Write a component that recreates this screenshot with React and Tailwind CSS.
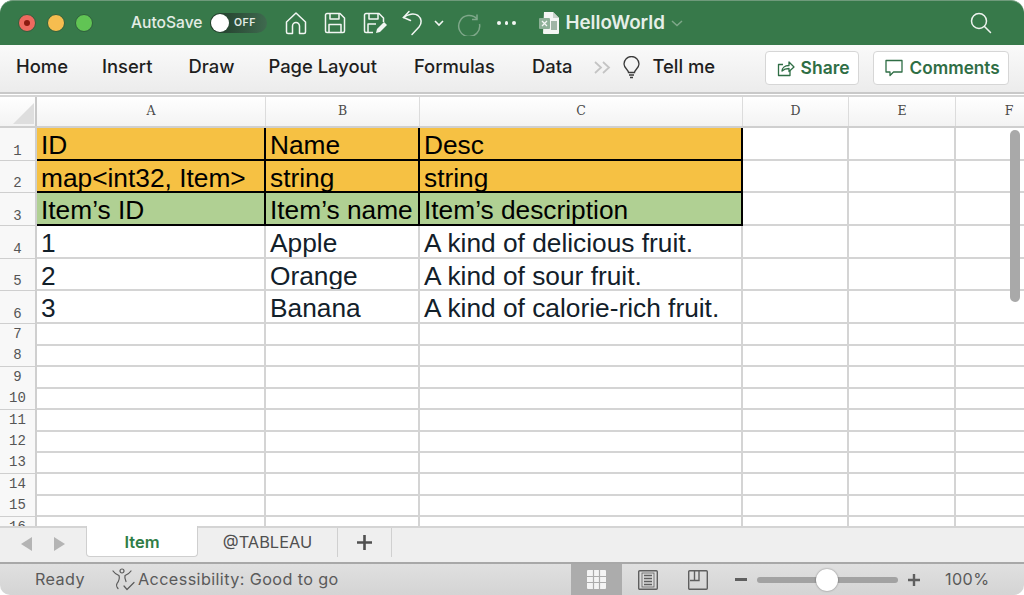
import React from "react";

const COLS = ["A", "B", "C", "D", "E", "F"];

const ROWS = [
  { n: 1, h: "h-[33px]", bg: "bg-[#f6c143]", line: true, cells: ["ID", "Name", "Desc"] },
  { n: 2, h: "h-[32px]", bg: "bg-[#f6c143]", line: true, cells: ["map<int32, Item>", "string", "string"] },
  { n: 3, h: "h-[33px]", bg: "bg-[#b0d093]", line: true, cells: ["Item’s ID", "Item’s name", "Item’s description"] },
  { n: 4, h: "h-[33px]", cells: ["1", "Apple", "A kind of delicious fruit."] },
  { n: 5, h: "h-[32px]", cells: ["2", "Orange", "A kind of sour fruit."] },
  { n: 6, h: "h-[33px]", cells: ["3", "Banana", "A kind of calorie-rich fruit."] },
];

const EMPTY = [7, 8, 9, 10, 11, 12, 13, 14, 15, 16];

function TitleBar() {
  return (
    <div className="h-[45px] shrink-0 bg-[#37794a] flex items-center text-white rounded-t-[13px] border-t border-[#6f9a7b]">
      {/* traffic lights */}
      <div className="flex items-center gap-[10.5px] ml-[18px] w-[113px]">
        <div className="w-[18px] h-[18px] rounded-full bg-[#ee6a5f] border border-[#2f5f3d] flex items-center justify-center">
          <div className="w-[6px] h-[6px] rounded-full bg-[#8c1a10]" />
        </div>
        <div className="w-[18px] h-[18px] rounded-full bg-[#f6bd4f] border border-[#2f5f3d]" />
        <div className="w-[18px] h-[18px] rounded-full bg-[#61c454] border border-[#2f5f3d]" />
      </div>
      <span className="text-[15.6px] font-medium text-[#e3ece5] w-[79px]">AutoSave</span>
      <div className="w-[57px] h-[20px] rounded-full bg-gradient-to-r from-[#1f3a28] to-[#3f6a4f] flex items-center pl-[1px]">
        <div className="w-[18px] h-[18px] rounded-full bg-white" />
        <span className="ml-[5px] text-[10.5px] font-semibold tracking-[0.5px] text-[#e3ece5]">OFF</span>
      </div>
      <svg className="ml-[18px]" width="22" height="24" viewBox="0 0 22 24" fill="none" stroke="#f2f6f3" strokeWidth="1.5" strokeLinejoin="round">
        <path d="M1.5 11 11 2l9.500 9v10a1.500 1.500 0 0 1-1.500 1.500h-4.500V15a3.500 3.500 0 0 0-7 0v7.500H3A1.500 1.500 0 0 1 1.500 21z" />
      </svg>
      <svg className="ml-[17px]" width="22" height="22" viewBox="0 0 22 22" fill="none" stroke="#f2f6f3" strokeWidth="1.5" strokeLinejoin="round">
        <path d="M3 1.500h13l4.500 4.500v13a1.500 1.500 0 0 1-1.500 1.500H3A1.500 1.500 0 0 1 1.500 19V3A1.500 1.500 0 0 1 3 1.500z" />
        <path d="M6 1.500v5.500h9V1.500M5 20.500v-8h12v8" />
      </svg>
      <svg className="ml-[17px]" width="24" height="24" viewBox="0 0 24 24" fill="none" stroke="#f2f6f3" strokeWidth="1.5" strokeLinejoin="round">
        <path d="M10 21.500H3A1.500 1.500 0 0 1 1.500 20V4A1.500 1.500 0 0 1 3 2.500h13L20.500 7v4" />
        <path d="M6 2.500V8h9V2.500M5 21v-8h8" />
        <path d="m13 22 1-4 7-7 3 3-7 7z" fill="#f2f6f3" stroke="none" />
      </svg>
      <svg className="ml-[15px]" width="22" height="26" viewBox="0 0 22 26" fill="none" stroke="#f2f6f3" strokeWidth="1.500" strokeLinecap="round">
        <path d="M7 1.500 1.500 7.500l7 3" />
        <path d="M1.500 7.500C6 4 12 3 16 5.500c4 3 4 8 1 11.500l-7 7.500" />
      </svg>
      <svg className="ml-[10px]" width="10" height="7" viewBox="0 0 10 7" fill="none" stroke="#f2f6f3" strokeWidth="1.600">
        <path d="m1 1 4 4 4-4" />
      </svg>
      <svg className="ml-[13px]" width="25" height="25" viewBox="0 0 25 25" fill="none" stroke="#7fa88a" strokeWidth="1.500">
        <path d="M20 3.500v5h-5" />
        <path d="M20 8a10.500 10.500 0 1 0 2.500 5" />
      </svg>
      <div className="ml-[15px] flex gap-[4px]">
        <div className="w-[3.500px] h-[3.500px] rounded-full bg-[#f2f6f3]" />
        <div className="w-[3.500px] h-[3.500px] rounded-full bg-[#f2f6f3]" />
        <div className="w-[3.500px] h-[3.500px] rounded-full bg-[#f2f6f3]" />
      </div>
      <svg className="ml-[23px]" width="20" height="22" viewBox="0 0 20 22">
        <path d="M5 0h9l6 6v15a1 1 0 0 1-1 1H5a1 1 0 0 1-1-1z" fill="#f4f6f4" />
        <path d="M14 0v6h6z" fill="#c9d3cb" />
        <rect x="12" y="9" width="6" height="9" fill="#9fb5a5" />
        <rect x="0" y="6" width="11" height="11" rx="1" fill="#8db097" />
        <path d="m3 9 5 5m0-5-5 5" stroke="#f4f6f4" strokeWidth="1.300" />
      </svg>
      <span className="ml-[7px] text-[18.8px] font-semibold text-[#e6efe8]">HelloWorld</span>
      <svg className="ml-[6px]" width="12" height="7" viewBox="0 0 12 7" fill="none" stroke="#7fa88a" strokeWidth="1.500">
        <path d="m1 1 5 4.500L11 1" />
      </svg>
      <svg className="ml-auto mr-[32px]" width="22" height="22" viewBox="0 0 22 22" fill="none" stroke="#eef3ef" strokeWidth="1.500" strokeLinecap="round">
        <circle cx="9" cy="9" r="7.500" />
        <path d="m14.500 14.500 6 6" />
      </svg>
    </div>
  );
}

function Ribbon() {
  return (
    <div className="h-[47px] shrink-0 pb-[3px] bg-gradient-to-b from-[#fafafa] to-[#ececec] flex items-center text-[#1e1e1e] text-[18.4px] font-medium">
      <span className="ml-[16px]">Home</span>
      <span className="ml-[34px]">Insert</span>
      <span className="ml-[36px]">Draw</span>
      <span className="ml-[34px]">Page Layout</span>
      <span className="ml-[37px]">Formulas</span>
      <span className="ml-[37px]">Data</span>
      <svg className="ml-[22px]" width="17" height="13" viewBox="0 0 17 13" fill="none" stroke="#c4c4c4" strokeWidth="1.800">
        <path d="m1 1 6 5.500L1 12M9 1l6 5.500L9 12" />
      </svg>
      <svg className="ml-[12px]" width="17" height="23" viewBox="0 0 17 23" fill="none" stroke="#3a3a3a" strokeWidth="1.300">
        <path d="M5.500 16.500c0-2.500-4.500-4.500-4.500-8.500a7.500 7.500 0 0 1 15 0c0 4-4.500 6-4.500 8.500z" />
        <path d="M6 19h5M7 21.500h3" />
      </svg>
      <span className="ml-[12px]">Tell me</span>
      <button className="ml-[50px] w-[94px] h-[34px] mt-[2px] pl-[2px] rounded-[4px] bg-white border border-[#d6d6d6] flex items-center justify-center gap-[6px] text-[#2f6e45] text-[17.5px] font-semibold">
        <svg width="18" height="18" viewBox="0 0 18 18" fill="none" stroke="#2f6e45" strokeWidth="1.300" strokeLinejoin="round">
          <path d="M6 5.500H1.500V16.500H13V12" />
          <path d="M5 12c0-3 2.500-5.500 7-5.500V3l5 5-5 4.500V9.500c-3 0-5 .5-7 2.500z" />
        </svg>
        Share
      </button>
      <button className="ml-[14px] w-[136px] h-[34px] mt-[2px] pl-[2px] rounded-[4px] bg-white border border-[#d6d6d6] flex items-center justify-center gap-[7px] text-[#2f6e45] text-[17.2px] font-semibold">
        <svg width="18" height="18" viewBox="0 0 18 18" fill="none" stroke="#2f6e45" strokeWidth="1.300" strokeLinejoin="round">
          <path d="M1 1.500h16v11.500H8.500L5 16.500V13H1z" />
        </svg>
        Comments
      </button>
    </div>
  );
}

function Sheet() {
  // last column runs past the window edge, its label sits near the scrollbar
  const grid = "grid grid-cols-[37px_229px_154px_323px_106px_107px_107px]";
  return (
    <div className="relative flex-1 overflow-hidden bg-white">
      <div className={`${grid} h-[31px] bg-gradient-to-b from-[#ffffff] to-[#f3f3f3] border-b-[2px] border-[#cfcfcf] font-['DejaVu_Serif',serif] text-[12.5px] text-[#4a4a4a]`}>
        <div className="relative border-r-[2px] border-[#c8c8c8]">
          <div className="absolute right-[1px] bottom-[2px] w-0 h-0 border-l-[21px] border-l-transparent border-b-[21px] border-b-[#dedede]" />
        </div>
        {COLS.map((c) => (
          <div key={c} className="flex items-center justify-center border-r border-[#dcdcdc]">{c}</div>
        ))}
      </div>
      {ROWS.map((r) => (
        <div key={r.n} className={`${grid} ${r.h} font-['Liberation_Sans',sans-serif] text-[26.3px] text-[#12202a]`}>
          <div className="flex items-end justify-center leading-[18px] bg-[#f8f8f8] border-r-[2px] border-b border-[#cfcfcf] font-['Liberation_Mono',monospace] text-[14px] text-[#555555]">{r.n}</div>
          {r.cells.map((t, i) => (
            <div
              key={i}
              className={`pl-[4px] pt-[5px] flex items-center whitespace-nowrap overflow-hidden ${
                r.line ? `${r.bg} border-r-[2px] border-b-[2px] border-black text-black` : "border-r-[2px] border-b-[2px] border-[#d4d4d4]"
              }`}
            >
              {t}
            </div>
          ))}
          <div className="border-r-[2px] border-b-[2px] border-[#d4d4d4]" />
          <div className="border-r-[2px] border-b-[2px] border-[#d4d4d4]" />
          <div className="border-b-[2px] border-[#d4d4d4]" />
        </div>
      ))}
      {EMPTY.map((n) => (
        <div key={n} className={`${grid} h-[21.4px]`}>
          <div className="flex items-center justify-center bg-[#f8f8f8] border-r-[2px] border-b border-[#cfcfcf] font-['Liberation_Mono',monospace] text-[14px] text-[#555555]">{n}</div>
          {[0, 1, 2, 3, 4].map((i) => (
            <div key={i} className="border-r-[2px] border-b-[2px] border-[#d4d4d4]" />
          ))}
          <div className="border-b-[2px] border-[#d4d4d4]" />
        </div>
      ))}
      {/* scrollbar thumb */}
      <div className="absolute right-[4px] top-[33px] w-[10px] h-[172px] rounded-full bg-[#a9a9a9]" />
    </div>
  );
}

function Tabs() {
  return (
    <div className="h-[36px] shrink-0 bg-[#efefef] border-t-[2px] border-[#d4d4d4] flex items-start">
      <div className="w-[86px] h-[32px] flex items-center pl-[21px] gap-[22px]">
        <div className="w-0 h-0 border-y-[7px] border-y-transparent border-r-[11px] border-r-[#b4b4b4]" />
        <div className="w-0 h-0 border-y-[7px] border-y-transparent border-l-[11px] border-l-[#b4b4b4]" />
      </div>
      <div className="w-[112px] h-[31px] -mt-[2px] bg-white rounded-b-[4px] border-x border-b border-[#cfcfcf] flex items-center justify-center pt-[2px] text-[16.5px] font-semibold text-[#2f7d46]">
        Item
      </div>
      <div className="w-[140px] h-[29px] border-r border-[#d0d0d0] flex items-center justify-center text-[16.4px] text-[#505050]">
        @TABLEAU
      </div>
      <div className="w-[54px] h-[29px] border-r border-[#d0d0d0] flex items-center justify-center">
        <svg width="15" height="15" viewBox="0 0 15 15" stroke="#505050" strokeWidth="2.600">
          <path d="M7.500 0v15M0 7.500h15" />
        </svg>
      </div>
    </div>
  );
}

function StatusBar() {
  return (
    <div className="h-[33px] shrink-0 bg-gradient-to-b from-[#e0e0e0] to-[#d4d4d4] border-t-[2px] border-[#a8a8a8] flex items-center text-[#5a5a5a] text-[16.2px] tracking-[0.4px] rounded-b-[10px]">
      <span className="ml-[35px] w-[49px]">Ready</span>
      <svg className="ml-[28px]" width="23" height="23" viewBox="0 0 23 23" fill="none" stroke="#5a5a5a" strokeWidth="1.200" strokeLinecap="round" strokeLinejoin="round">
        <circle cx="10" cy="3" r="2" />
        <path d="M1 3c2 3 5 4 6 4.500 1 3-.5 6-2 8-1 1.500 0 4 1 5M19 3c-2 3-5 4-6 4.500-.5 2 0 4 1 6" />
        <path d="m12 18 3 3.500 7-7" />
      </svg>
      <span className="ml-[3px] w-[200px] whitespace-nowrap">Accessibility: Good to go</span>
      <div className="ml-[233px] w-[51px] h-full bg-[#acacac] flex items-center justify-center">
        <svg width="19" height="19" viewBox="0 0 19 19">
          <rect width="19" height="19" rx="1" fill="#f4f4f4" />
          <path d="M0 6.500h19M0 12.500h19M6.500 0v19M12.500 0v19" stroke="#acacac" strokeWidth="1.200" />
        </svg>
      </div>
      <svg className="ml-[16px]" width="20" height="20" viewBox="0 0 20 20" fill="none" stroke="#5f5f5f" strokeWidth="1.400">
        <rect x="0.700" y="0.700" width="18.600" height="18.600" rx="1" />
        <path d="M6 5.500h8M6 8.500h8M6 11.500h8M6 14.500h8" />
        <rect x="4" y="3" width="12" height="14" strokeWidth="0.800" />
      </svg>
      <svg className="ml-[30px]" width="20" height="20" viewBox="0 0 20 20" fill="none" stroke="#5f5f5f" strokeWidth="1.400">
        <rect x="0.700" y="0.700" width="18.600" height="18.600" rx="1" />
        <path d="M2 10.500h9V1M6.500 1v9.500" />
      </svg>
      <div className="ml-[27px] w-[12px] h-[3px] bg-[#5f5f5f]" />
      <div className="ml-[10px] relative w-[141px] h-[6px] rounded-full bg-[#a2a2a2]">
        <div className="absolute left-[59px] -top-[8px] w-[22px] h-[22px] rounded-full bg-white shadow-[0_0_2px_rgba(0,0,0,0.45)]" />
      </div>
      <svg className="ml-[10px]" width="12" height="12" viewBox="0 0 12 12" stroke="#5f5f5f" strokeWidth="2.400">
        <path d="M6 0v12M0 6h12" />
      </svg>
      <span className="ml-[25px]">100%</span>
    </div>
  );
}

export default function App() {
  return (
    <div className="w-[1024px] h-[595px] flex flex-col overflow-hidden bg-white font-['Inter',sans-serif]">
      <TitleBar />
      <Ribbon />
      <div className="h-[5px] shrink-0 bg-white border-y-[2px] border-t-[#c9c9c9] border-b-[#d6d6d6]" />
      <Sheet />
      <Tabs />
      <StatusBar />
    </div>
  );
}
